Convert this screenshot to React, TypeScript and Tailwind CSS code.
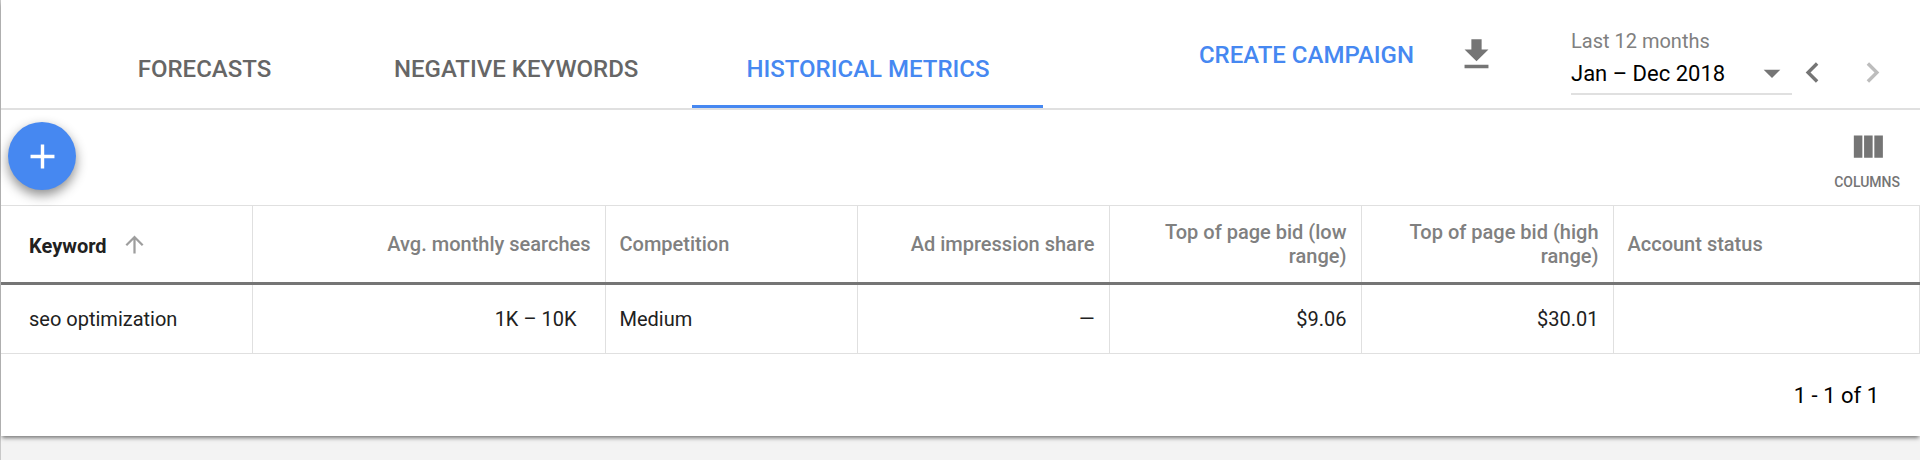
import { useState } from "react";
import {
  MdAdd,
  MdArrowDropDown,
  MdArrowUpward,
  MdChevronLeft,
  MdChevronRight,
  MdGetApp,
} from "react-icons/md";

interface columnInterface {
  title: string;
  width: string;
  align: string;
}

interface keywordInterface {
  keyword: string;
  searches: string;
  competition: string;
  impressionShare: string;
  lowBid: string;
  highBid: string;
  status: string;
}

const tabs = ["FORECASTS", "NEGATIVE KEYWORDS", "HISTORICAL METRICS"];

const columns: columnInterface[] = [
  { title: "Avg. monthly searches", width: "w-[353px]", align: "text-right" },
  { title: "Competition", width: "w-[252px]", align: "text-left" },
  { title: "Ad impression share", width: "w-[252px]", align: "text-right" },
  {
    title: "Top of page bid (low range)",
    width: "w-[252px]",
    align: "text-right",
  },
  {
    title: "Top of page bid (high range)",
    width: "w-[252px]",
    align: "text-right",
  },
  { title: "Account status", width: "", align: "text-left" },
];

const keywords: keywordInterface[] = [
  {
    keyword: "seo optimization",
    searches: "1K – 10K",
    competition: "Medium",
    impressionShare: "—",
    lowBid: "$9.06",
    highBid: "$30.01",
    status: "",
  },
];

const Header = () => {
  const [activeTab, setActiveTab] = useState<string>("HISTORICAL METRICS");

  return (
    <header className="flex items-start justify-between border-b-2 border-[#e0e0e0]">
      <nav className="flex pl-[68px]">
        {tabs.map((tab) => (
          <button
            key={tab}
            type="button"
            onClick={() => setActiveTab(tab)}
            className={`min-w-[271px] border-b-3 px-[54px] pt-[53px] pb-5 text-[24px] leading-8 font-medium whitespace-nowrap ${
              activeTab === tab
                ? "border-[#4688f1] text-[#4688f1]"
                : "border-transparent text-[#666666]"
            }`}
          >
            {tab}
          </button>
        ))}
      </nav>
      <div className="flex items-start pr-[27px]">
        <button
          type="button"
          className="mt-[39px] text-[24px] leading-8 font-medium whitespace-nowrap text-[#4688f1]"
        >
          CREATE CAMPAIGN
        </button>
        <button
          type="button"
          aria-label="Download"
          className="mt-[34px] ml-[42px] text-[#757575]"
        >
          <MdGetApp size={41} />
        </button>
        <div className="mt-[29px] ml-[74px] w-[221px]">
          <label
            htmlFor="period"
            className="block text-[20px] leading-6 text-[#808080]"
          >
            Last 12 months
          </label>
          <div className="relative">
            <select
              id="period"
              className="h-[42px] w-full appearance-none border-b-2 border-[#e0e0e0] bg-transparent text-[22px] text-black"
            >
              <option>Jan – Dec 2018</option>
            </select>
            <MdArrowDropDown
              size={40}
              className="pointer-events-none absolute top-0 right-0 text-[#757575]"
            />
          </div>
        </div>
        <div className="mt-[52px] flex gap-[19px] text-[#757575]">
          <button type="button" aria-label="Previous period">
            <MdChevronLeft size={41} />
          </button>
          <button
            type="button"
            aria-label="Next period"
            className="text-[#bdbdbd]"
            disabled
          >
            <MdChevronRight size={41} />
          </button>
        </div>
      </div>
    </header>
  );
};

const Toolbar = () => {
  return (
    <div className="flex items-start justify-between pt-3 pr-5 pb-[15px] pl-[7px]">
      <button
        type="button"
        aria-label="Add keyword"
        className="flex size-[68px] items-center justify-center rounded-full bg-[#4688f1] text-white shadow-[0_5px_12px_rgba(0,0,0,0.45)]"
      >
        <MdAdd size={41} />
      </button>
      <button
        type="button"
        className="mt-[5px] flex flex-col items-center gap-[6px] text-[14px] leading-4 font-medium text-[#757575]"
      >
        <svg width="41" height="41" viewBox="0 0 24 24" fill="currentColor">
          <path d="M10 18h5V5h-5v13zm-6 0h5V5H4v13zM16 5v13h5V5h-5z" />
        </svg>
        COLUMNS
      </button>
    </div>
  );
};

const KeywordTable = () => {
  return (
    <table className="w-full table-fixed border-collapse text-[20px] leading-6">
      <thead>
        <tr className="h-[78px] border-t border-b-3 border-t-[#e0e0e0] border-b-[#757575]">
          <th className="w-[251px] border-r border-[#e0e0e0] pl-7 text-left font-bold text-[#212121]">
            <button type="button" className="flex items-center gap-[14px]">
              <span className="pt-1">Keyword</span>
              <MdArrowUpward size={27} className="text-[#9e9e9e]" />
            </button>
          </th>
          {columns.map((column) => (
            <th
              key={column.title}
              className={`border-r border-[#e0e0e0] px-[14px] font-medium text-[#808080] ${column.width} ${column.align}`}
            >
              {column.title}
            </th>
          ))}
        </tr>
      </thead>
      <tbody className="text-[#212121]">
        {keywords.map((row) => (
          <tr
            key={row.keyword}
            className="h-[70px] border-b border-[#e0e0e0] *:border-r *:border-[#e0e0e0]"
          >
            <td className="pl-7">{row.keyword}</td>
            <td className="pr-7 text-right">{row.searches}</td>
            <td className="px-[14px]">{row.competition}</td>
            <td className="px-[14px] text-right">{row.impressionShare}</td>
            <td className="px-[14px] text-right">{row.lowBid}</td>
            <td className="px-[14px] text-right">{row.highBid}</td>
            <td className="px-[14px]">{row.status}</td>
          </tr>
        ))}
      </tbody>
    </table>
  );
};

const App = () => {
  return (
    <div className="min-h-screen border-l border-[#c8c8c8] bg-[#f3f3f3] font-[Roboto,sans-serif]">
      <main className="bg-white shadow-[0_3px_4px_-1px_rgba(0,0,0,0.5)]">
        <Header />
        <Toolbar />
        <KeywordTable />
        <footer className="flex justify-end pt-[26px] pr-[41px] pb-6 text-[22px] leading-8 text-black">
          1 - 1 of 1
        </footer>
      </main>
    </div>
  );
};

export default App;
